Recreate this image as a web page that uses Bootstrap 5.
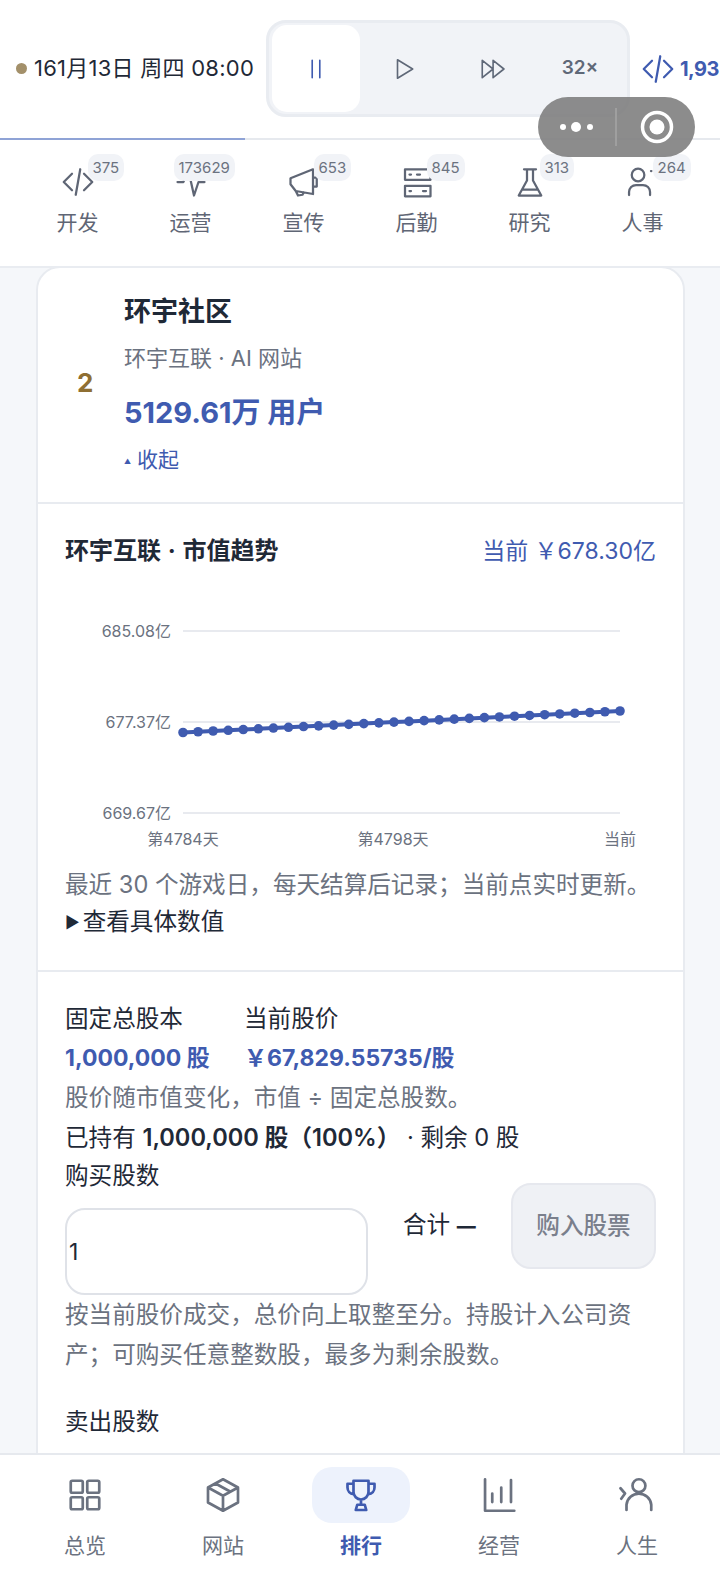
<!DOCTYPE html>
<html lang="zh-CN">
<head>
    <meta charset="UTF-8">
    <meta name="viewport" content="width=device-width, initial-scale=1.0">
    <title>排行</title>
    <link href="https://cdn.jsdelivr.net/npm/bootstrap@5.3.0/dist/css/bootstrap.min.css" rel="stylesheet">
    <style>
        body {
            font-family: "Inter", "Noto Sans CJK SC", sans-serif;
            color: #1f2937;
            background: #f5f7fa;
        }
        .app-shell { height: 1575px; overflow: hidden; }
        .ink-icon { fill: none; stroke: currentColor; stroke-width: 1.5; stroke-linecap: round; stroke-linejoin: round; }

        /* top bar */
        .top-bar { background: #fff; position: relative; }
        .clock-row { padding: 20px 0 21px 16px; white-space: nowrap; overflow: hidden; }
        .status-dot { width: 11px; height: 11px; border-radius: 50%; background: #a3906a; flex: none; margin-right: 7px; }
        .clock-text { font-size: 22px; width: 232px; flex: none; letter-spacing: .25px; }
        .speed-box { width: 364px; height: 97px; flex: none; background: #f1f3f7; border: 3px solid #e9ecf1; border-radius: 20px; padding: 2px 0 2px 3px; }
        .speed-btn { width: 88px; flex: none; color: #5f6878; font-size: 19px; font-weight: 600; }
        .speed-on { background: #fff; border-radius: 15px; color: #3f5bb0; }
        .code-stat { color: #3f5bb0; font-size: 20px; font-weight: 700; letter-spacing: -.5px; margin-left: 10px; flex: none; gap: 4px; }
        .time-track { height: 2px; border-radius: 0; background: #e6e9ee; }
        .time-track .progress-bar { background: #8fa3d6; }
        .wx-capsule { position: absolute; left: 538px; top: 97px; width: 157px; height: 60px; border-radius: 30px; background: rgba(128,128,128,.9); z-index: 5; }

        /* department tabs */
        .dept-row { padding: 24px 20px 28px 21px; border-bottom: 2px solid #e9ecf1; background: #fff; }
        .dept-item { width: 113px; flex: none; position: relative; color: #5f6675; }
        .dept-item svg { display: block; }
        .dept-label { font-size: 21px; line-height: 30px; margin-top: 8px; }
        .dept-count { position: absolute; left: calc(50% + 10px); top: -10px; height: 27px; line-height: 27px; padding: 0 5px; background: #f1f3f7; border-radius: 10px; font-size: 15px; color: #6b7280; }
        .dept-count-wide { left: calc(50% - 17px); }

        /* ranking card */
        .page-body { flex: 1 1 auto; min-height: 0; overflow: hidden; padding: 0 35px 0 36px; }
        .rank-card { border: 2px solid #e8ebf0; border-radius: 24px 24px 0 0; background: #fff; margin-top: -2px; }
        .site-head { padding: 24px 0 22px 39px; border-bottom: 2px solid #e8ebf0; }
        .rank-no { width: 47px; flex: none; font-size: 26px; font-weight: 700; color: #8f6f32; padding-bottom: 8px; }
        .site-name { font-size: 27px; line-height: 40px; font-weight: 700; }
        .site-sub { font-size: 22px; line-height: 36px; margin-top: 8px; color: #6b7280; }
        .site-users { font-size: 29px; line-height: 40px; margin-top: 17px; font-weight: 700; color: #3f5bb0; }
        .site-toggle { font-size: 21px; line-height: 36px; margin-top: 9px; color: #3f5bb0; }
        .site-toggle i { font-style: normal; font-size: 7px; margin-right: 6px; vertical-align: 3px; }
        .card-part { padding: 28px 27px; }
        .card-part + .card-part { border-top: 2px solid #e8ebf0; }
        .trend-part { padding-bottom: 30px; }
        .trend-title { font-size: 24px; line-height: 38px; font-weight: 700; word-spacing: 1px; }
        .trend-now { font-size: 23px; line-height: 38px; color: #3f5bb0; }
        .trend-chart { display: block; margin-top: 32px; }
        .trend-chart text { font-size: 16px; fill: #6b7280; }
        .soft-note { font-size: 23.6px; line-height: 40px; color: #6b7280; }
        .more-link { font-size: 23.6px; line-height: 36px; margin-top: -1px; }
        .more-link i { font-style: normal; font-size: 16px; margin-right: 3px; vertical-align: 2px; }
        .line-text { font-size: 23.6px; line-height: 38px; }
        .stat-value { font-size: 23px; line-height: 40px; font-weight: 700; color: #3f5bb0; }
        .stat-left { width: 179px; flex: none; }
        .held-line { line-height: 39px; }
        .held-line b { font-weight: 600; }
        .buy-col { width: 303px; flex: none; }
        .qty-input { height: 87px; margin-top: 13px; border: 2px solid #dfe2e8; border-radius: 20px; padding: 0 2px; font-size: 23px; color: #1f2937; }
        .sum-text { width: 73px; flex: none; white-space: nowrap; font-size: 23.6px; line-height: 38px; }
        .sum-text b { font-size: 19px; font-weight: 800; }
        .buy-btn { width: 145px; height: 86px; flex: none; padding: 0; background: #eff1f5; border: 2px solid #e6e8ee; border-radius: 20px; font-size: 23.6px; font-weight: 500; color: #7a7f8c; opacity: 1; }
        .buy-btn:disabled { background: #eff1f5; border-color: #e6e8ee; color: #7a7f8c; opacity: 1; }
        .sell-label { margin-top: 28px; }

        /* bottom nav */
        .bottom-nav { height: 122px; flex: none; padding: 12px 16px 0; background: #fff; border-top: 2px solid #e6e9ee; position: relative; z-index: 2; }
        .tab-item { width: 138px; flex: none; color: #6b7280; }
        .tab-item .ink-icon { stroke-width: 1.8; }
        .tab-pill { width: 98px; height: 56px; border-radius: 20px; }
        .tab-label { font-size: 21px; line-height: 30px; margin-top: 8px; }
        .tab-on { color: #3f5bb0; }
        .tab-on .tab-pill { background: #edf2fc; }
        .tab-on .tab-label { font-weight: 700; }
    </style>
</head>
<body>
<div class="app-shell d-flex flex-column">

    <header class="top-bar flex-none">
        <div class="clock-row d-flex align-items-center">
            <span class="status-dot"></span>
            <span class="clock-text">161月13日 周四 08:00</span>
            <div class="speed-box d-flex align-items-stretch">
                <div class="speed-btn speed-on d-flex align-items-center justify-content-center">
                    <svg class="ink-icon" width="26" height="26" viewBox="0 0 24 24"><path d="M8.5 4v16M15.5 4v16"/></svg>
                </div>
                <div class="speed-btn d-flex align-items-center justify-content-center">
                    <svg class="ink-icon" width="26" height="26" viewBox="0 0 24 24"><path d="M6 3.500l14 8.500-14 8.500z"/></svg>
                </div>
                <div class="speed-btn d-flex align-items-center justify-content-center">
                    <svg class="ink-icon" width="26" height="26" viewBox="0 0 24 24"><path d="M3 4l10 8-10 8zM13 4l10 8-10 8z"/></svg>
                </div>
                <div class="speed-btn d-flex align-items-center justify-content-center">32×</div>
            </div>
            <div class="code-stat d-flex align-items-center">
                <svg class="ink-icon" width="36" height="36" viewBox="0 0 24 24"><path d="M8 6.500L2.500 12 8 17.500M16 6.500l5.500 5.500-5.500 5.500M13.500 3.500l-3 17"/></svg>
                <span>1,93</span>
            </div>
        </div>
        <div class="progress time-track"><div class="progress-bar" style="width: 34%"></div></div>
        <div class="wx-capsule d-flex align-items-center">
            <svg width="157" height="60" viewBox="0 0 157 60">
                <circle cx="25" cy="30" r="3" fill="#fff"/><circle cx="38" cy="30" r="5" fill="#fff"/><circle cx="52" cy="30" r="3" fill="#fff"/>
                <path d="M78 11v38" stroke="#a6a6a6" stroke-width="1.5"/>
                <circle cx="119" cy="30" r="14.5" fill="none" stroke="#fff" stroke-width="3.5"/><circle cx="119" cy="30" r="7.5" fill="#fff"/>
            </svg>
        </div>
    </header>

    <nav class="dept-row d-flex flex-none">
        <div class="dept-item d-flex flex-column align-items-center">
            <svg class="ink-icon" width="36" height="36" viewBox="0 0 24 24"><path d="M8 6.500L2.500 12 8 17.500M16 6.500l5.500 5.500-5.500 5.500M13.500 3.500l-3 17"/></svg>
            <div class="dept-label">开发</div>
            <span class="dept-count">375</span>
        </div>
        <div class="dept-item d-flex flex-column align-items-center">
            <svg class="ink-icon" width="36" height="36" viewBox="0 0 24 24"><path d="M3 12h4l3-9 4 18 3-9h4"/></svg>
            <div class="dept-label">运营</div>
            <span class="dept-count dept-count-wide">173629</span>
        </div>
        <div class="dept-item d-flex flex-column align-items-center">
            <svg class="ink-icon" width="36" height="36" viewBox="0 0 24 24"><path d="M18 3.500L3 9.500v4l3.500 4.500L18 20zM6.500 18l1.500 3 3-.5.8-1.500M18 9h2.500v6H18"/></svg>
            <div class="dept-label">宣传</div>
            <span class="dept-count">653</span>
        </div>
        <div class="dept-item d-flex flex-column align-items-center">
            <svg class="ink-icon" width="36" height="36" viewBox="0 0 24 24"><path d="M4 3.500h17v7H4zM4 14.500h17v7H4zM7 7h1M12 7h2M7 18h1M16 18h2"/></svg>
            <div class="dept-label">后勤</div>
            <span class="dept-count">845</span>
        </div>
        <div class="dept-item d-flex flex-column align-items-center">
            <svg class="ink-icon" width="36" height="36" viewBox="0 0 24 24"><path d="M8 3.500h8M10 3.500V11L4.500 21h15L14 11V3.500M7 17h10"/></svg>
            <div class="dept-label">研究</div>
            <span class="dept-count">313</span>
        </div>
        <div class="dept-item d-flex flex-column align-items-center">
            <svg class="ink-icon" width="36" height="36" viewBox="0 0 24 24"><circle cx="8.700" cy="7.300" r="4.200"/><path d="M2.700 20.700v-2A4.700 4.700 0 0 1 7.400 14h4.600a4.700 4.700 0 0 1 4.700 4.700v2M17.300 4.700h.3"/></svg>
            <div class="dept-label">人事</div>
            <span class="dept-count">264</span>
        </div>
    </nav>

    <main class="page-body">
        <div class="card rank-card">
            <div class="site-head d-flex align-items-center">
                <div class="rank-no">2</div>
                <div>
                    <div class="site-name">环宇社区</div>
                    <div class="site-sub">环宇互联 · AI 网站</div>
                    <div class="site-users">5129.61万 用户</div>
                    <div class="site-toggle"><i>▲</i>收起</div>
                </div>
            </div>

            <section class="card-part trend-part">
                <div class="d-flex justify-content-between">
                    <div class="trend-title">环宇互联 · 市值趋势</div>
                    <div class="trend-now">当前 ￥678.30亿</div>
                </div>
                <svg id="trendChart" class="trend-chart" width="591" height="263" viewBox="65 600 591 263"></svg>
                <div class="soft-note text-nowrap">最近 30 个游戏日，每天结算后记录；当前点实时更新。</div>
                <div class="more-link"><i>▶</i>查看具体数值</div>
            </section>

            <section class="card-part">
                <div class="d-flex line-text">
                    <div class="stat-left">固定总股本</div>
                    <div>当前股价</div>
                </div>
                <div class="d-flex stat-value">
                    <div class="stat-left">1,000,000 股</div>
                    <div>￥67,829.55735/股</div>
                </div>
                <div class="soft-note">股价随市值变化，市值 ÷ 固定总股数。</div>
                <div class="line-text held-line">已持有 <b>1,000,000 股（100%）</b> · 剩余 0 股</div>
                <div class="d-flex align-items-center">
                    <div class="buy-col">
                        <label class="line-text d-block" for="buyQty">购买股数</label>
                        <input id="buyQty" class="form-control qty-input" type="text" value="1">
                    </div>
                    <div class="sum-text ms-auto"><span>合计</span> <b>—</b></div>
                    <button class="btn buy-btn ms-auto" disabled>购入股票</button>
                </div>
                <div class="soft-note">按当前股价成交，总价向上取整至分。持股计入公司资产；可购买任意整数股，最多为剩余股数。</div>
                <div class="line-text sell-label">卖出股数</div>
            </section>
        </div>
    </main>

    <nav class="bottom-nav d-flex">
        <div class="tab-item d-flex flex-column align-items-center">
            <div class="tab-pill d-flex align-items-center justify-content-center">
                <svg class="ink-icon" width="36" height="36" viewBox="0 0 24 24"><rect x="2.500" y="2.500" width="8" height="8" rx="1"/><rect x="13.500" y="2.500" width="8" height="8" rx="1"/><rect x="2.500" y="13.500" width="8" height="8" rx="1"/><rect x="13.500" y="13.500" width="8" height="8" rx="1"/></svg>
            </div>
            <div class="tab-label">总览</div>
        </div>
        <div class="tab-item d-flex flex-column align-items-center">
            <div class="tab-pill d-flex align-items-center justify-content-center">
                <svg class="ink-icon" width="36" height="36" viewBox="0 0 24 24"><path d="M12 1.500l10 5.500v10l-10 5.500L2 17V7zM2 7l10 5.500L22 7M12 12.500v10M7 4.300l10 5.500"/></svg>
            </div>
            <div class="tab-label">网站</div>
        </div>
        <div class="tab-item tab-on d-flex flex-column align-items-center">
            <div class="tab-pill d-flex align-items-center justify-content-center">
                <svg class="ink-icon" width="36" height="36" viewBox="0 0 24 24"><path d="M7 2.500h10v7.500a5 5 0 0 1-10 0zM7 4.500H3v2.500A4.500 4.500 0 0 0 7 11.500M17 4.500h4v2.500a4.500 4.500 0 0 1-4 4.500M12 15v3.500M9.500 18.500h5l1 3.500h-7z"/></svg>
            </div>
            <div class="tab-label">排行</div>
        </div>
        <div class="tab-item d-flex flex-column align-items-center">
            <div class="tab-pill d-flex align-items-center justify-content-center">
                <svg class="ink-icon" width="36" height="36" viewBox="0 0 24 24"><path d="M2.700 1.500v21h19.500M7.500 11v5.700M13.500 7v9.700M20 2v14.700"/></svg>
            </div>
            <div class="tab-label">经营</div>
        </div>
        <div class="tab-item d-flex flex-column align-items-center">
            <div class="tab-pill d-flex align-items-center justify-content-center">
                <svg class="ink-icon" width="36" height="36" viewBox="0 0 24 24"><circle cx="13.300" cy="5.800" r="4.300"/><path d="M5 22v-3.500a8.300 8.300 0 0 1 16.500 0V22M1 7.500l3 3.500-2.500 3.500"/></svg>
            </div>
            <div class="tab-label">人生</div>
        </div>
    </nav>
</div>

<script src="https://cdn.jsdelivr.net/npm/bootstrap@5.3.0/dist/js/bootstrap.bundle.min.js"></script>
<script>
    // draw the market value chart, coordinates are the picture's own
    const chart = document.getElementById('trendChart');
    let svg = '';
    [[629, '685.08亿'], [720, '677.37亿'], [811, '669.67亿']].forEach(([y, label]) => {
        svg += `<line x1="183" x2="620" y1="${y}" y2="${y}" stroke="#e8eaef" stroke-width="2"/>`;
        svg += `<text x="171" y="${y + 6}" text-anchor="end">${label}</text>`;
    });
    [[183, '第4784天'], [393, '第4798天'], [620, '当前']].forEach(([x, label]) => {
        svg += `<text x="${x}" y="843" text-anchor="middle">${label}</text>`;
    });
    const points = [];
    for (let i = 0; i < 30; i++) {
        points.push([183 + i * 437 / 29, 730.5 - i * 21.5 / 29]);
    }
    svg += `<polyline fill="none" stroke="#3f5bb0" stroke-width="4" points="${points.map(p => p.join(',')).join(' ')}"/>`;
    points.forEach(p => {
        svg += `<circle cx="${p[0]}" cy="${p[1]}" r="4.800" fill="#3f5bb0"/>`;
    });
    chart.innerHTML = svg;
</script>
</body>
</html>
